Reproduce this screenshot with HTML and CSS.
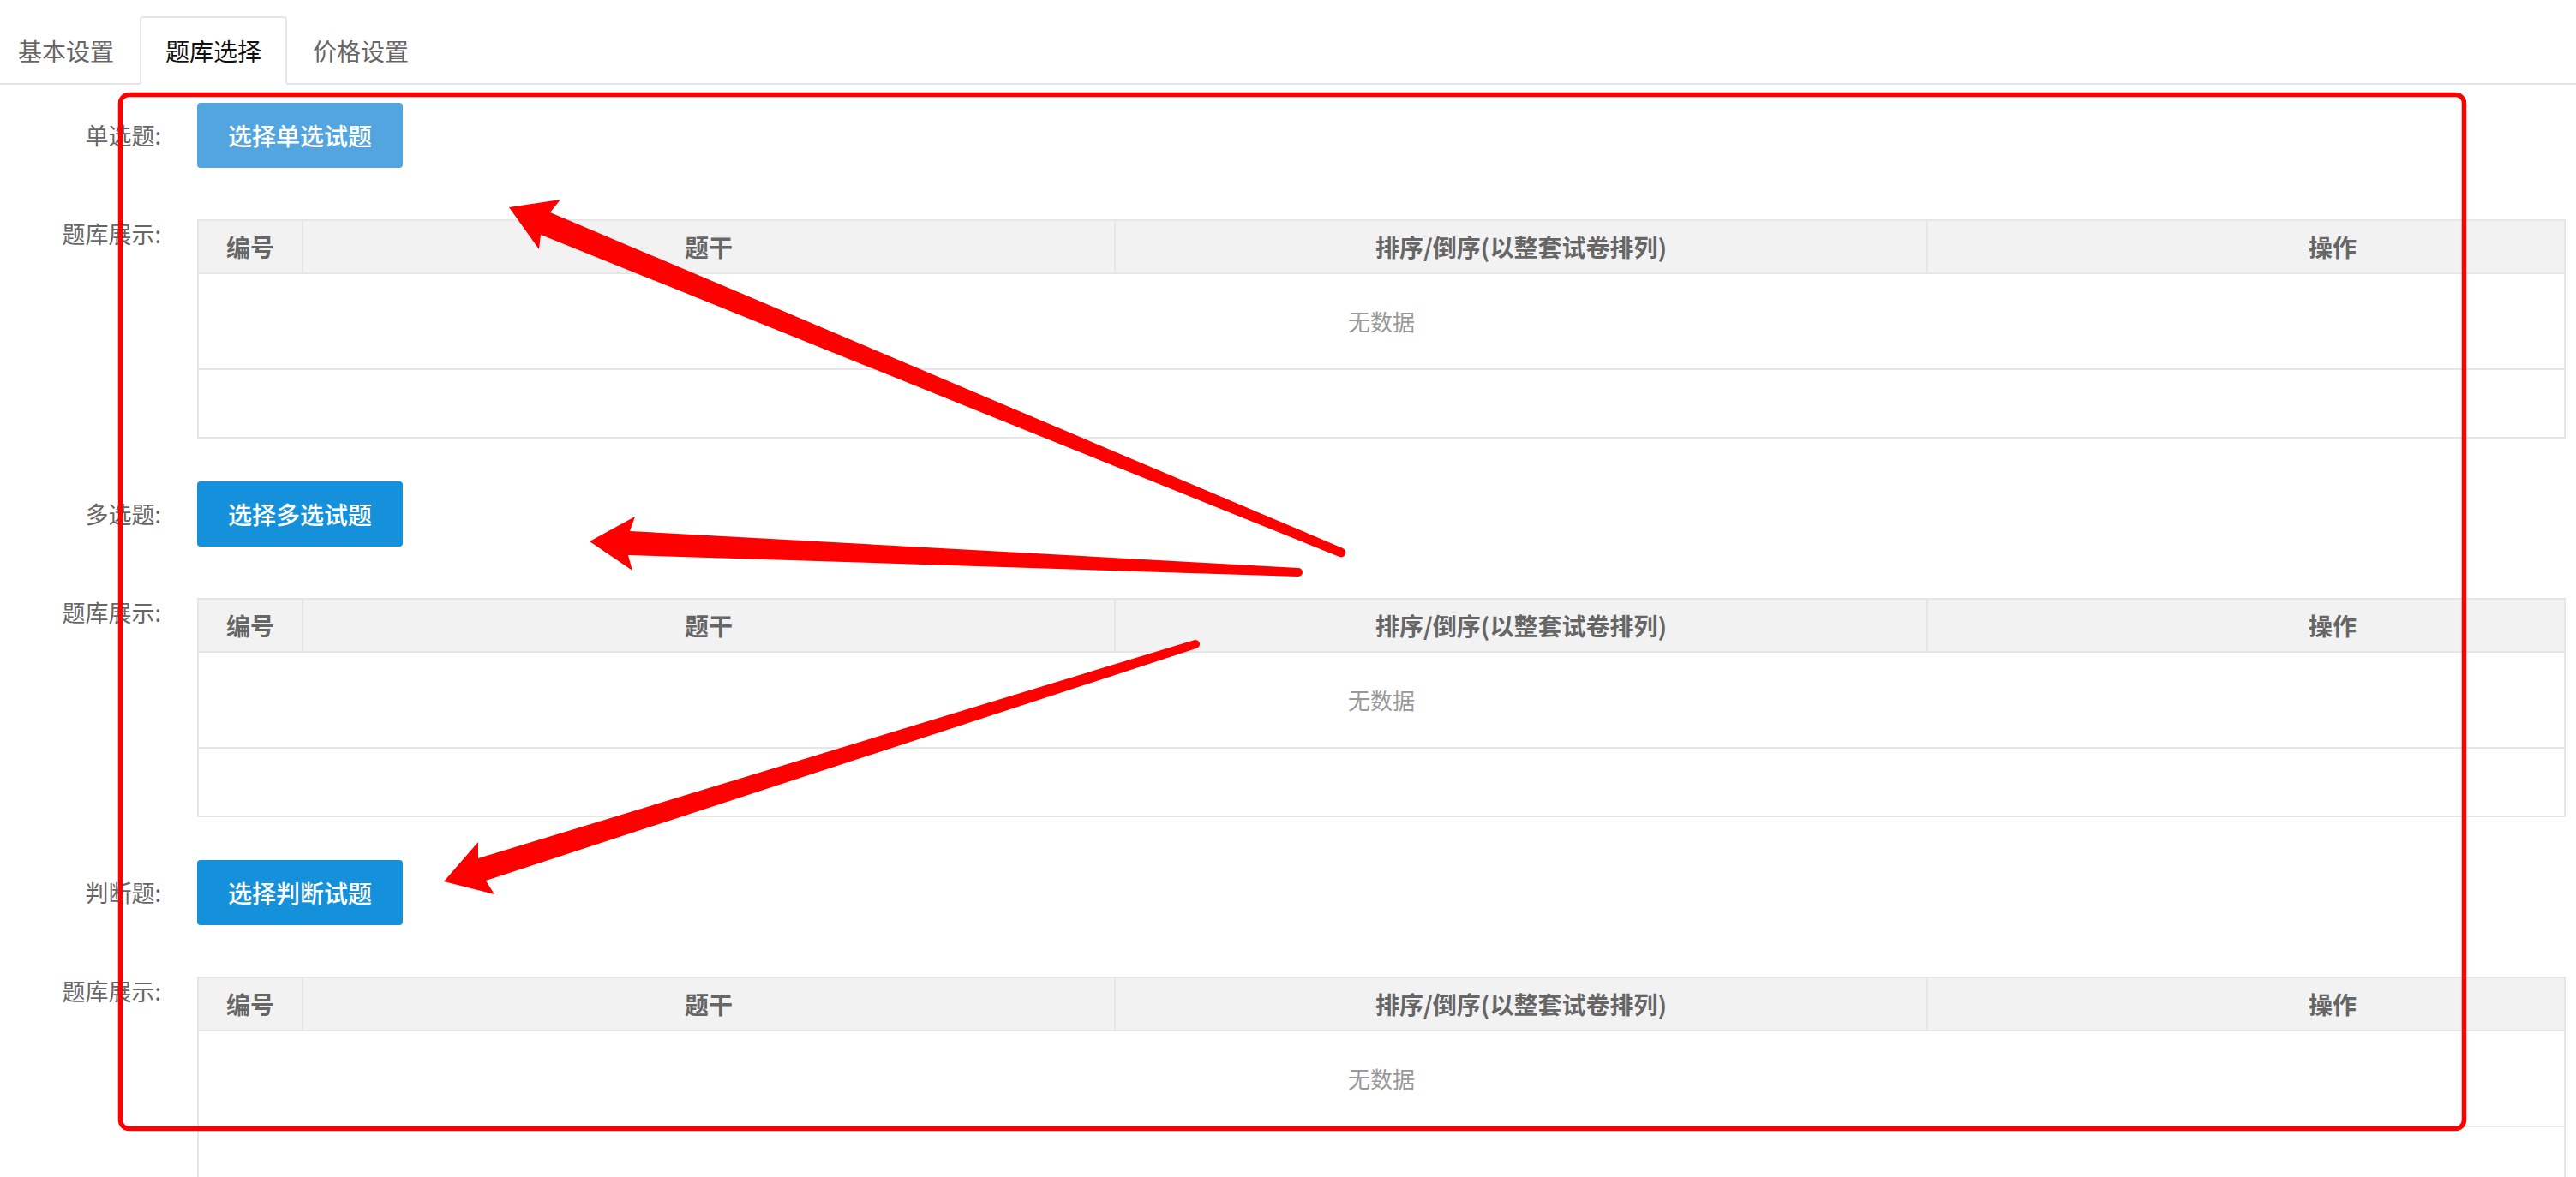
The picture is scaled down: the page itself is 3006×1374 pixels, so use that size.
FILE: index.html
```html
<!DOCTYPE html>
<html lang="zh-CN">
<head>
  <meta charset="UTF-8">
  <meta name="viewport" content="width=device-width, initial-scale=1.0">
  <title>题库选择</title>
  <link rel="stylesheet" href="styles.css">
</head>
<body>
  <ul class="tabs">
    <li>基本设置</li>
    <li class="active">题库选择</li>
    <li>价格设置</li>
  </ul>
  <form class="form">
    <div class="section">
      <div class="row">
        <label>单选题:</label>
        <div><button type="button" class="btn btn-light">选择单选试题</button></div>
      </div>
      <div class="row row-table">
        <label>题库展示:</label>
        <div class="table-view">
          <table>
            <colgroup><col class="c-id"><col class="c-wide"><col class="c-wide"><col class="c-op"></colgroup>
            <thead><tr><th>编号</th><th>题干</th><th>排序/倒序(以整套试卷排列)</th><th>操作</th></tr></thead>
          </table>
          <div class="table-none">无数据</div>
          <div class="table-foot"></div>
        </div>
      </div>
    </div>
    <div class="section">
      <div class="row">
        <label>多选题:</label>
        <div><button type="button" class="btn">选择多选试题</button></div>
      </div>
      <div class="row row-table">
        <label>题库展示:</label>
        <div class="table-view">
          <table>
            <colgroup><col class="c-id"><col class="c-wide"><col class="c-wide"><col class="c-op"></colgroup>
            <thead><tr><th>编号</th><th>题干</th><th>排序/倒序(以整套试卷排列)</th><th>操作</th></tr></thead>
          </table>
          <div class="table-none">无数据</div>
          <div class="table-foot"></div>
        </div>
      </div>
    </div>
    <div class="section">
      <div class="row">
        <label>判断题:</label>
        <div><button type="button" class="btn">选择判断试题</button></div>
      </div>
      <div class="row row-table">
        <label>题库展示:</label>
        <div class="table-view">
          <table>
            <colgroup><col class="c-id"><col class="c-wide"><col class="c-wide"><col class="c-op"></colgroup>
            <thead><tr><th>编号</th><th>题干</th><th>排序/倒序(以整套试卷排列)</th><th>操作</th></tr></thead>
          </table>
          <div class="table-none">无数据</div>
          <div class="table-foot"></div>
        </div>
      </div>
    </div>
  </form>

  <!-- annotation marks drawn on top of the screenshot -->
  <svg class="marks" width="3006" height="1374" viewBox="0 0 3006 1374">
    <rect x="140.5" y="110.5" width="2735" height="1207" rx="10" fill="none" stroke="#fe0000" stroke-width="5.5"/>
    <g fill="#fe0000">
      <path d="M594 242 L654 233 L642 248 L1567 640 A5 5 0 0 1 1563 650 L631 274 L629 291 Z"/>
      <path d="M688 632 L741 603 L735 620 L1515 663 A5 5 0 0 1 1515 673 L733 648 L738 666 Z"/>
      <path d="M518 1029 L558 983 L558 1002 L1393.5 747.2 A5 5 0 0 1 1396.5 756.8 L567 1028 L577 1044 Z"/>
    </g>
  </svg>
</body>
</html>
```

FILE: styles.css
```css
html, body {
  margin: 0;
  overflow: hidden;
}
body {
  position: relative;
  background: #fff;
  color: #666;
  font-family: "Noto Sans CJK SC", "Liberation Sans", sans-serif;
}
.tabs {
  display: flex;
  list-style: none;
  margin: 0 0 0 -9px;
  padding: 19px 0 0;
  border-bottom: 2px solid #e6e6e6;
}
.tabs li {
  font-size: 28px;
  line-height: 76px;
  padding: 0 28px;
  border: 2px solid transparent;
  border-radius: 4px 4px 0 0;
  margin-bottom: -2px;
  color: #666;
}
.tabs li.active {
  color: #111;
  background: #fff;
  border-color: #e6e6e6;
  border-bottom-color: #fff;
}
.form {
  padding: 21px 12px 0 0;
}
.section {
  margin-bottom: 50px;
}
.row {
  display: grid;
  grid-template-columns: 188px minmax(0, 1fr);
  column-gap: 42px;
}
.row + .row {
  margin-top: 60px;
}
.row label {
  text-align: right;
  font-size: 27px;
  line-height: 76px;
  color: #666;
}
.row-table label {
  line-height: 34px;
}
.btn {
  height: 76px;
  padding: 0 36px;
  border: none;
  border-radius: 4px;
  background: #1591dc;
  color: #fff;
  font-family: inherit;
  font-size: 28px;
  font-weight: 500;
  display: block;
}
.btn-light {
  background: #53a5e0;
}
.table-view {
  border: 2px solid #e6e6e6;
  overflow: hidden;
}
.table-view table {
  width: 2964px;
  table-layout: fixed;
  border-collapse: separate;
  border-spacing: 0;
  background: #f2f2f2;
}
.c-id { width: 122px; }
.c-wide { width: 948px; }
.c-op { width: 946px; }
.table-view th {
  height: 60px;
  padding: 0;
  border-right: 2px solid #e6e6e6;
  border-bottom: 2px solid #e6e6e6;
  font-size: 28px;
  font-weight: bold;
  color: #666;
  text-align: center;
}
.table-none {
  height: 110px;
  line-height: 110px;
  text-align: center;
  font-size: 26px;
  color: #999;
  border-bottom: 2px solid #e6e6e6;
}
.table-foot {
  height: 78px;
}
.marks {
  position: absolute;
  top: 0;
  left: 0;
  pointer-events: none;
}
```
